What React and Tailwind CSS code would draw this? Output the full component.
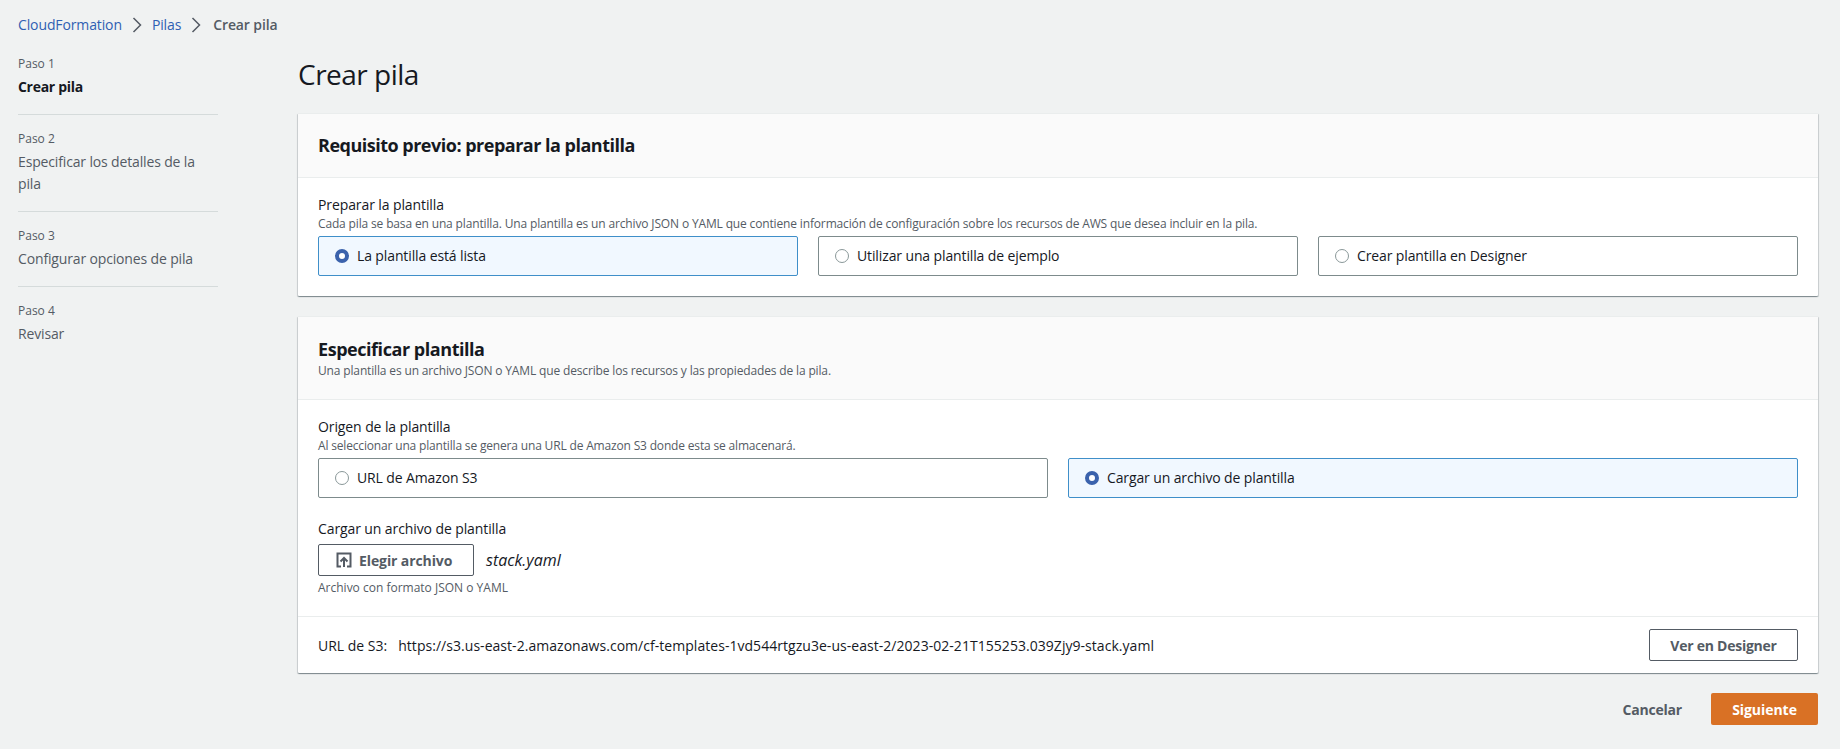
import React from "react";

const FONT = "font-['Open_Sans','Noto_Sans',sans-serif]";

const STEPS = [
  { step: "Paso 1", name: "Crear pila", active: true },
  { step: "Paso 2", name: "Especificar los detalles de la pila" },
  { step: "Paso 3", name: "Configurar opciones de pila" },
  { step: "Paso 4", name: "Revisar" },
];

const Chevron = () => (
  <svg width="10" height="16" viewBox="0 0 10 16" fill="none" stroke="#545b64" strokeWidth="1.5" className="mx-[10px]">
    <path d="M1.5 1 8.5 8l-7 7" />
  </svg>
);

const UploadIcon = () => (
  <svg width="16" height="16" viewBox="0 0 16 16" fill="none" stroke="#545b64" strokeWidth="2" className="mr-[7px]">
    <path d="M5 14.5H1.5v-13h13v13H11" />
    <path d="M8 15V6.5M4.5 9.5 8 6l3.5 3.5" />
  </svg>
);

const RadioTile = ({ label, checked }) => (
  <div
    className={`flex h-10 items-center rounded-[2px] border px-[16px] ${
      checked ? "border-[#3f8fc9] bg-[#f1f8ff]" : "border-[#7d8b8c] bg-white"
    }`}
  >
    {checked ? (
      <span className="mr-[8px] h-[14px] w-[14px] rounded-full border-[4px] border-[#3b62ac] bg-white" />
    ) : (
      <span className="mr-[8px] h-[14px] w-[14px] rounded-full border border-[#8a9899] bg-white" />
    )}
    <span className="text-[14px] leading-[22px] tracking-[-0.12px] text-[#16191f]">{label}</span>
  </div>
);

const Card = ({ children }) => (
  <div className="rounded-[1px] border-t border-[#eaeded] bg-white shadow-[0_1px_1px_0_rgba(0,28,36,0.3),1px_1px_1px_0_rgba(0,28,36,0.15),-1px_1px_1px_0_rgba(0,28,36,0.15)]">
    {children}
  </div>
);

export default function App() {
  return (
    <div className={`h-[749px] overflow-hidden bg-[#f0f2f2] ${FONT} text-[#16191f]`}>
      <nav className="flex h-[50px] items-center pb-[1px] pl-[18px] text-[14px] tracking-[-0.12px]">
        <span className="text-[#2f5fb3]">CloudFormation</span>
        <Chevron />
        <span className="text-[#2f5fb3]">Pilas</span>
        <Chevron />
        <span className="ml-[2px] font-semibold text-[#545b64]">Crear pila</span>
      </nav>

      <div className="flex">
        <aside className="ml-[18px] w-[200px] pt-[6px]">
          {STEPS.map((s, i) => (
            <div key={s.step} className={i < STEPS.length - 1 ? "mb-[16px] border-b border-[#d5dbdb] pb-[16px]" : ""}>
              <div className="text-[12px] leading-4 text-[#545b64]">{s.step}</div>
              <div className={`mt-[4px] text-[14px] leading-[22px] ${s.active ? "font-bold tracking-[-0.3px] text-[#16191f]" : "tracking-[-0.15px] text-[#545b64]"}`}>
                {s.name}
              </div>
            </div>
          ))}
        </aside>

        <main className="ml-[80px] w-[1520px]">
          <h1 className="mb-[21px] mt-[6px] text-[28px] leading-[36px] font-normal tracking-[-0.5px]">Crear pila</h1>

          <Card>
            <div className="border-b border-[#eaeded] bg-[#fafafa] px-5 pb-[21px] pt-[20px]">
              <h2 className="text-[18px] leading-[22px] font-bold tracking-[-0.5px]">Requisito previo: preparar la plantilla</h2>
            </div>
            <div className="px-5 pb-5 pt-4">
              <div className="text-[14px] leading-[22px] tracking-[-0.1px]">Preparar la plantilla</div>
              <div className="text-[12px] leading-4 tracking-[-0.15px] text-[#545b64]">
                Cada pila se basa en una plantilla. Una plantilla es un archivo JSON o YAML que contiene información de configuración sobre los recursos de AWS que desea incluir en la pila.
              </div>
              <div className="mt-1 grid grid-cols-3 gap-5">
                <RadioTile label="La plantilla está lista" checked />
                <RadioTile label="Utilizar una plantilla de ejemplo" />
                <RadioTile label="Crear plantilla en Designer" />
              </div>
            </div>
          </Card>

          <div className="mt-[20px]">
            <Card>
              <div className="border-b border-[#eaeded] bg-[#fafafa] px-5 pb-[20px] pt-[21px]">
                <h2 className="text-[18px] leading-[22px] font-bold tracking-[-0.45px]">Especificar plantilla</h2>
                <div className="mt-[3px] text-[12px] leading-4 tracking-[-0.15px] text-[#545b64]">
                  Una plantilla es un archivo JSON o YAML que describe los recursos y las propiedades de la pila.
                </div>
              </div>
              <div className="border-b border-[#eaeded] px-5 pb-5 pt-4">
                <div className="text-[14px] leading-[22px] tracking-[-0.1px]">Origen de la plantilla</div>
                <div className="text-[12px] leading-4 tracking-[-0.17px] text-[#545b64]">
                  Al seleccionar una plantilla se genera una URL de Amazon S3 donde esta se almacenará.
                </div>
                <div className="mt-1 grid grid-cols-2 gap-5">
                  <RadioTile label="URL de Amazon S3" />
                  <RadioTile label="Cargar un archivo de plantilla" checked />
                </div>
                <div className="mt-5 text-[14px] leading-[22px] tracking-[-0.1px]">Cargar un archivo de plantilla</div>
                <div className="mt-1 flex items-center">
                  <button className="flex h-8 w-[156px] items-center rounded-[2px] border border-[#545b64] bg-white pl-[17px] text-[14px] font-bold tracking-[-0.1px] text-[#545b64]">
                    <UploadIcon />
                    Elegir archivo
                  </button>
                  <span className="ml-[12px] text-[16px] italic">stack.yaml</span>
                </div>
                <div className="mt-1 text-[12px] leading-4 text-[#545b64]">Archivo con formato JSON o YAML</div>
              </div>
              <div className="flex items-center justify-between px-5 py-3">
                <div className="text-[14px]">
                  <span>URL de S3:</span>
                  <span className="ml-[11px] tracking-[0.04px]">https://s3.us-east-2.amazonaws.com/cf-templates-1vd544rtgzu3e-us-east-2/2023-02-21T155253.039Zjy9-stack.yaml</span>
                </div>
                <button className="h-8 w-[149px] rounded-[2px] border border-[#545b64] bg-white text-[14px] font-bold tracking-[-0.25px] text-[#545b64]">
                  Ver en Designer
                </button>
              </div>
            </Card>
          </div>

          <div className="mt-5 flex items-center justify-end">
            <button className="mr-[29px] text-[14px] font-bold tracking-[-0.2px] text-[#545b64]">Cancelar</button>
            <button className="h-8 w-[107px] rounded-[2px] bg-[#d97125] text-[14px] font-bold tracking-[-0.05px] text-white">Siguiente</button>
          </div>
        </main>
      </div>
    </div>
  );
}
